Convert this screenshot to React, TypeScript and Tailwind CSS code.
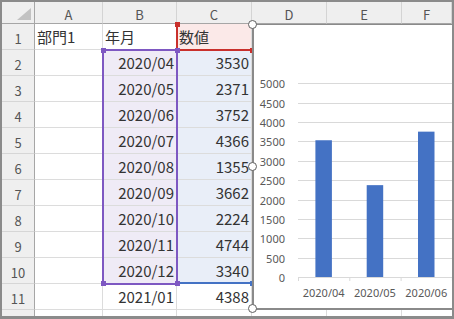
import React from 'react';

const rows: { a?: string; b?: string; c?: string; bBg?: string; cBg?: string }[] = [
  { a: '部門1', b: '年月', c: '数値', cBg: 'bg-[#fbe9e8]' },
  { b: '2020/04', c: '3530', bBg: 'bg-[#efebf6]', cBg: 'bg-[#e9eef8]' },
  { b: '2020/05', c: '2371', bBg: 'bg-[#efebf6]', cBg: 'bg-[#e9eef8]' },
  { b: '2020/06', c: '3752', bBg: 'bg-[#efebf6]', cBg: 'bg-[#e9eef8]' },
  { b: '2020/07', c: '4366', bBg: 'bg-[#efebf6]', cBg: 'bg-[#e9eef8]' },
  { b: '2020/08', c: '1355', bBg: 'bg-[#efebf6]', cBg: 'bg-[#e9eef8]' },
  { b: '2020/09', c: '3662', bBg: 'bg-[#efebf6]', cBg: 'bg-[#e9eef8]' },
  { b: '2020/10', c: '2224', bBg: 'bg-[#efebf6]', cBg: 'bg-[#e9eef8]' },
  { b: '2020/11', c: '4744', bBg: 'bg-[#efebf6]', cBg: 'bg-[#e9eef8]' },
  { b: '2020/12', c: '3340', bBg: 'bg-[#efebf6]', cBg: 'bg-[#e9eef8]' },
  { b: '2021/01', c: '4388' },
];

const bars = [
  { label: '2020/04', value: 3530 },
  { label: '2020/05', value: 2371 },
  { label: '2020/06', value: 3752 },
];

function Chart() {
  // local coords: origin at abs (254, 25)
  const base = 252;
  const scale = 193.7 / 5000;
  const ticks = [5000, 4500, 4000, 3500, 3000, 2500, 2000, 1500, 1000, 500, 0];
  const catW = 51.3;
  const left = 44;
  return (
    <svg width="210" height="283" className="block">
      {ticks.map((t) => {
        const y = Math.round(base - t * scale) + 0.5;
        return (
          <g key={t}>
            <line x1={left} x2={220} y1={y} y2={y} stroke="#d9d9d9" strokeWidth="1" />
            <text x={31} y={y} textAnchor="end" dominantBaseline="central" fontSize="11" fill="#595959" fontFamily="'Noto Sans', sans-serif">
              {t}
            </text>
          </g>
        );
      })}
      {[0, 1, 2, 3].map((i) => (
        <line key={i} x1={left + i * catW + 0.5} x2={left + i * catW + 0.5} y1={base} y2={base + 4} stroke="#d9d9d9" strokeWidth="1" />
      ))}
      {bars.map((b, i) => {
        const cx = left + catW * i + catW / 2;
        const h = b.value * scale;
        return (
          <g key={b.label}>
            <rect x={cx - 8.25} y={base - h} width={16.5} height={h} fill="#4472c4" />
            <text x={cx} y={267.5} textAnchor="middle" dominantBaseline="central" fontSize="11" fill="#595959" fontFamily="'Noto Sans', sans-serif">
              {b.label}
            </text>
          </g>
        );
      })}
    </svg>
  );
}

const Handle = ({ cls }: { cls: string }) => (
  <div className={`absolute w-[9px] h-[9px] rounded-full bg-white border-[1.5px] border-[#5f5f5f] ${cls}`} />
);

const Square = ({ cls }: { cls: string }) => <div className={`absolute w-[5px] h-[5px] ${cls}`} />;

export default function App() {
  const cols = ['A', 'B', 'C', 'D', 'E', 'F'];
  const widths = ['w-[68px]', 'w-[74px]', 'w-[75px]', 'w-[75px]', 'w-[75px]', 'w-[50px]'];

  return (
    <div className="w-[454px] h-[319px] bg-white border-2 border-b-[3px] border-[#8b8b8b] overflow-hidden" style={{ fontFamily: "'Noto Sans CJK JP', 'Noto Sans', sans-serif" }}>
      <div className="relative w-[450px] h-[314px] overflow-hidden">
        {/* column headers */}
        <div className="flex h-[22px]">
          <div className="w-[33px] shrink-0 bg-[#efefef] border-r border-b border-[#a6a6a6] relative">
            <svg width="14" height="12" className="absolute right-[3px] bottom-[3px]">
              <polygon points="14,0 14,12 0,12" fill="#c2c2c2" />
            </svg>
          </div>
          {cols.map((c, i) => (
            <div key={c} className={`${widths[i]} shrink-0 bg-[#efefef] border-r border-r-[#d4d4d4] border-b border-b-[#a6a6a6] flex items-center justify-center pt-[3px] text-[13px] leading-none text-[#555]`}>
              {c}
            </div>
          ))}
        </div>

        {/* rows */}
        {rows.concat([{}]).map((r, i) => (
          <div key={i} className="flex h-[26px]">
            <div className="w-[33px] shrink-0 bg-[#efefef] border-r border-r-[#a6a6a6] border-b border-b-[#d6d6d6] flex items-end justify-center pb-[4px] text-[13px] leading-none text-[#555]">
              {i < 11 ? i + 1 : ''}
            </div>
            <div className="w-[68px] shrink-0 border-r border-b border-[#dcdcdc] flex items-center px-[2px] text-[15px] leading-none text-[#333]">
              {r.a}
            </div>
            <div className={`w-[74px] shrink-0 border-r border-b border-[#dcdcdc] flex items-center px-[2px] text-[15px] leading-none text-[#333] ${r.bBg ?? ''} ${i === 0 ? 'justify-start' : 'justify-end'}`}>
              {r.b}
            </div>
            <div className={`w-[75px] shrink-0 border-r border-b border-[#dcdcdc] flex items-center px-[2px] text-[15px] leading-none text-[#333] ${r.cBg ?? ''} ${i === 0 ? 'justify-start' : 'justify-end'}`}>
              {r.c}
            </div>
            <div className="w-[75px] shrink-0 border-r border-b border-[#dcdcdc]" />
            <div className="w-[75px] shrink-0 border-r border-b border-[#dcdcdc]" />
            <div className="w-[50px] shrink-0 border-b border-[#dcdcdc]" />
          </div>
        ))}

        {/* series range highlights */}
        <div className="absolute left-[174px] top-[22px] w-[76px] h-[27px] border-l-2 border-b-2 border-[#c9302c]" />
        <div className="absolute left-[175px] top-[280px] w-[75px] h-[2px] bg-[#4472c4]" />
        <div className="absolute left-[100px] top-[47px] w-[76px] h-[236px] border-2 border-[#7e58c2]" />
        <Square cls="left-[173px] top-[20px] bg-[#c9302c]" />
        <Square cls="left-[248px] top-[46px] bg-[#c9302c]" />
        <Square cls="left-[99px] top-[46px] bg-[#7e58c2]" />
        <Square cls="left-[173px] top-[46px] bg-[#7e58c2]" />
        <Square cls="left-[99px] top-[279px] bg-[#7e58c2]" />
        <Square cls="left-[173px] top-[279px] bg-[#7e58c2]" />
        <Square cls="left-[248px] top-[279px] bg-[#4472c4]" />

        {/* chart */}
        <div className="absolute left-[250px] top-[22px] w-[210px] h-[286px] bg-white border-l-2 border-t border-b-2 border-[#8a8a8a]">
          <Chart />
        </div>
        <Handle cls="left-[246px] top-[18px]" />
        <Handle cls="left-[246px] top-[160px]" />
        <Handle cls="left-[246px] top-[302px]" />
      </div>
    </div>
  );
}
